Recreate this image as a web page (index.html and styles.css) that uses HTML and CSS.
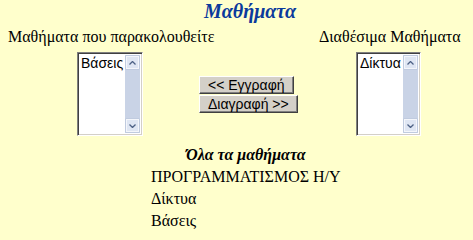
FILE: index.html
```html
<!DOCTYPE html>
<html lang="el">
<head>
<meta charset="utf-8">
<title>Μαθήματα</title>
<link rel="stylesheet" href="styles.css">
</head>
<body>
<div class="page">
  <h1 class="title">Μαθήματα</h1>
  <div class="labels">
    <div class="label">Μαθήματα που παρακολουθείτε</div>
    <div class="label">Διαθέσιμα Μαθήματα</div>
  </div>
  <div class="controls">
    <div class="listbox">
      <div class="options"><div class="option">Βάσεις</div></div>
      <div class="scrollbar">
        <span class="arrow"><svg width="7" height="4" viewBox="0 0 7 4"><path d="M0.5 3.5 L3.5 0.5 L6.5 3.5" fill="none" stroke="#4d6185" stroke-width="1.3"/></svg></span>
        <span class="arrow"><svg width="7" height="4" viewBox="0 0 7 4"><path d="M0.5 0.5 L3.5 3.5 L6.5 0.5" fill="none" stroke="#4d6185" stroke-width="1.3"/></svg></span>
      </div>
    </div>
    <div class="actions">
      <button class="btn" type="button">&lt;&lt; Εγγραφή</button>
      <button class="btn" type="button">Διαγραφή &gt;&gt;</button>
    </div>
    <div class="listbox listbox-right">
      <div class="options"><div class="option">Δίκτυα</div></div>
      <div class="scrollbar">
        <span class="arrow"><svg width="7" height="4" viewBox="0 0 7 4"><path d="M0.5 3.5 L3.5 0.5 L6.5 3.5" fill="none" stroke="#4d6185" stroke-width="1.3"/></svg></span>
        <span class="arrow"><svg width="7" height="4" viewBox="0 0 7 4"><path d="M0.5 0.5 L3.5 3.5 L6.5 0.5" fill="none" stroke="#4d6185" stroke-width="1.3"/></svg></span>
      </div>
    </div>
  </div>
  <div class="all">
    <div class="all-head">Όλα τα μαθήματα</div>
    <div class="all-item">ΠΡΟΓΡΑΜΜΑΤΙΣΜΟΣ Η/Υ</div>
    <div class="all-item">Δίκτυα</div>
    <div class="all-item">Βάσεις</div>
  </div>
</div>
</body>
</html>
```
FILE: styles.css
```css
html, body {
  margin: 0;
  background: #ffffcc;
}
body {
  font-family: "Liberation Serif", "Times New Roman", serif;
  font-size: 16px;
  color: #000;
}
.page {
  padding: 0 8px;
}
.title {
  margin: 0;
  padding-left: 27px;
  text-align: center;
  font-size: 20px;
  line-height: 22px;
  font-weight: bold;
  font-style: italic;
  color: #0b3a9c;
}
.labels {
  display: grid;
  grid-template-columns: 311px auto;
  margin-top: 6px;
  line-height: 18px;
}
.controls {
  display: flex;
  align-items: center;
  margin-top: 6px;
  padding-left: 69px;
}
.listbox {
  display: flex;
  flex: none;
  width: 66px;
  height: 84px;
  box-sizing: border-box;
  background: #fff;
  border-style: solid;
  border-width: 1px;
  border-color: #808080 #ffffff #ffffff #808080;
  box-shadow: inset 1px 1px 0 #404040, inset -1px -1px 0 #d4d0c8;
  padding: 2px;
}
.listbox-right {
  width: 65px;
  margin-left: 56px;
}
.options {
  flex: 1;
  padding: 0 1px;
  font-family: "Liberation Sans", Arial, sans-serif;
  font-size: 14px;
  line-height: 16px;
}
.scrollbar {
  width: 15px;
  display: flex;
  flex-direction: column;
  justify-content: space-between;
  background: #c9d3e6;
}
.arrow {
  display: flex;
  align-items: center;
  justify-content: center;
  height: 13px;
  margin: 1px;
  box-sizing: border-box;
  border: 1px solid #f4f6fb;
  background: #dfe6f3;
  box-shadow: 0 0 0 0.5px #b8c3d8;
}
.actions {
  display: flex;
  flex: none;
  flex-direction: column;
  align-items: flex-start;
  gap: 1px;
  margin-left: 56px;
  width: 101px;
}
.btn {
  font-family: "Liberation Sans", Arial, sans-serif;
  font-size: 14px;
  line-height: 16px;
  height: 18px;
  padding: 0 8px;
  margin: 0;
  background: #d4d0c8;
  color: #000;
  border-style: solid;
  border-width: 1px;
  border-color: #ffffff #404040 #404040 #ffffff;
  box-shadow: inset -1px -1px 0 #808080;
  border-radius: 0;
}
.all {
  width: fit-content;
  margin-left: 143px;
  margin-top: 8px;
  line-height: 22px;
}
.all-head {
  text-align: center;
  font-weight: bold;
  font-style: italic;
}
```
